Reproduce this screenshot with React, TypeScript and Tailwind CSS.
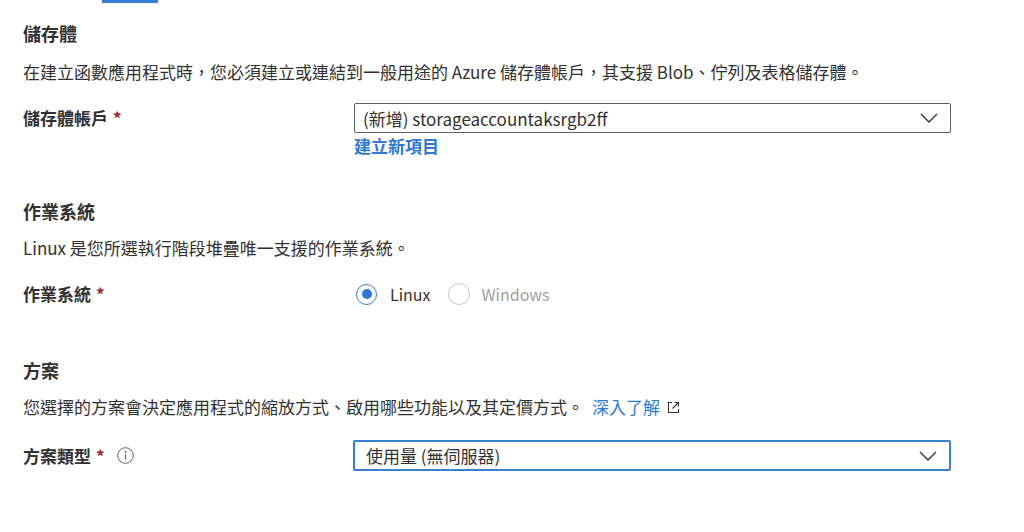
import React from "react";

const font = "font-['Noto_Sans_CJK_TC','Noto_Sans',sans-serif]";

function Chevron() {
  return (
    <svg width="18" height="10" viewBox="0 0 18 10" fill="none">
      <polyline points="1,1 9,9 17,1" stroke="#323130" strokeWidth="1.3" fill="none" />
    </svg>
  );
}

function Select({ value, focused }: { value: string; focused?: boolean }) {
  return (
    <div
      className={
        focused
          ? "flex h-[31px] w-[598px] items-center justify-between rounded-[2px] border-2 border-[#3a7fd0] pl-[11px] pr-[12px]"
          : "flex h-[30px] w-[597px] items-center justify-between rounded-[2px] border border-[#605e5c] pl-[8px] pr-[12px]"
      }
    >
      <span className="text-[17px] text-[#323130] leading-none">{value}</span>
      <Chevron />
    </div>
  );
}

function Required() {
  return <span className="ml-[5px] text-[#a4262c]">*</span>;
}

export default function App() {
  return (
    <div className={`w-[1024px] h-[532px] overflow-hidden bg-white ${font} text-[#323130]`}>
      <div className="ml-[102px] h-[3px] w-[56px] bg-[#3a7fd5]" />
      <div className="pl-[23px]">
        {/* Section 1 */}
        <h2 className="mt-[18px] h-[24px] text-[18px] leading-[24px] font-semibold">儲存體</h2>
        <p className="mt-[15px] h-[24px] text-[17px] leading-[24px]">
          在建立函數應用程式時，您必須建立或連結到一般用途的 Azure 儲存體帳戶，其支援 Blob、佇列及表格儲存體。
        </p>
        <div className="mt-[19px] flex">
          <div className="w-[331px] h-[30px] flex items-center text-[17px] font-semibold">
            儲存體帳戶<Required />
          </div>
          <div>
            <Select value="(新增) storageaccountaksrgb2ff" />
            <div className="mt-[1px] h-[24px] text-[17px] leading-[24px] font-semibold text-[#2f78d4]">建立新項目</div>
          </div>
        </div>

        {/* Section 2 */}
        <h2 className="mt-[41px] h-[24px] text-[18px] leading-[24px] font-semibold">作業系統</h2>
        <p className="mt-[13px] h-[24px] text-[17px] leading-[24px]">Linux 是您所選執行階段堆疊唯一支援的作業系統。</p>
        <div className="mt-[19px] flex h-[30px] items-center">
          <div className="w-[331px] flex items-center text-[17px] font-semibold">
            作業系統<Required />
          </div>
          <div className="flex items-center">
            <div className="ml-[2px] flex h-[21px] w-[21px] items-center justify-center rounded-full border-[1.5px] border-[#2f78d4]">
              <div className="h-[10px] w-[10px] rounded-full bg-[#2f78d4]" />
            </div>
            <span className="ml-[13px] text-[16px] text-[#323130]">Linux</span>
            <div className="ml-[17px] h-[22px] w-[22px] rounded-full border border-[#c8c6c4]" />
            <span className="ml-[12px] text-[16px] text-[#a19f9d]">Windows</span>
          </div>
        </div>

        {/* Section 3 */}
        <h2 className="mt-[49px] h-[24px] text-[18px] leading-[24px] font-semibold">方案</h2>
        <p className="mt-[13px] flex h-[24px] items-center text-[17px] leading-[24px]">
          <span>您選擇的方案會決定應用程式的縮放方式、啟用哪些功能以及其定價方式。</span>
          <span className="ml-[8px] text-[#2f78d4]">深入了解</span>
          <svg className="ml-[7px]" width="13" height="13" viewBox="0 0 13 13" fill="none">
            <path d="M5 1.5H1.5V11.5H11.5V8" stroke="#323130" strokeWidth="1.1" />
            <path d="M7.5 1.5H11.5V5.5" stroke="#323130" strokeWidth="1.1" />
            <path d="M11.5 1.5L5.5 7.5" stroke="#323130" strokeWidth="1.1" />
          </svg>
        </p>
        <div className="mt-[21px] flex h-[31px] items-center">
          <div className="w-[330px] flex items-center text-[17px] font-semibold">
            方案類型<Required />
            <svg className="ml-[12px]" width="17" height="17" viewBox="0 0 17 17" fill="none">
              <circle cx="8.5" cy="8.5" r="7.8" stroke="#605e5c" strokeWidth="1" />
              <circle cx="8.5" cy="5" r="0.9" fill="#605e5c" />
              <path d="M8.5 7.3V12.6" stroke="#605e5c" strokeWidth="1.1" />
            </svg>
          </div>
          <Select value="使用量 (無伺服器)" focused />
        </div>
      </div>
    </div>
  );
}
